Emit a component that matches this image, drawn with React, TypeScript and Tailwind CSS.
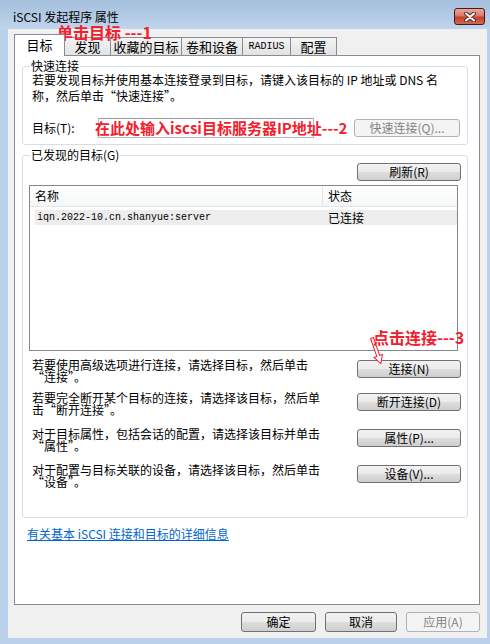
const btn =
  "flex h-[18px] items-center justify-center rounded-[3px] border border-[#707070] bg-[linear-gradient(#f2f2f2_0%,#ebebeb_50%,#dddddd_51%,#cfcfcf_100%)] text-[12px] leading-none whitespace-nowrap";
const btnOff =
  "flex h-[18px] items-center justify-center rounded-[3px] border border-[#adb2b5] bg-[#f4f4f4] text-[12px] leading-none text-[#838383] whitespace-nowrap";
const mono = "font-['Liberation_Mono',monospace] text-[10px]";

const tabs = [
  { label: "发现", w: "w-[46px]" },
  { label: "收藏的目标", w: "w-[71px]" },
  { label: "卷和设备", w: "w-[61px]" },
  { label: "RADIUS", w: "w-[48px]" },
  { label: "配置", w: "w-[46px]" },
];

const actions = [
  { lines: ["若要使用高级选项进行连接，请选择目标，然后单击", "“连接”。"], btn: "连接(N)", mt: "mt-[8px]" },
  { lines: ["若要完全断开某个目标的连接，请选择该目标，然后单", "击“断开连接”。"], btn: "断开连接(D)", mt: "mt-[9px]" },
  { lines: ["对于目标属性，包括会话的配置，请选择该目标并单击", "“属性”。"], btn: "属性(P)...", mt: "mt-[12px]" },
  { lines: ["对于配置与目标关联的设备，请选择该目标，然后单击", "“设备”。"], btn: "设备(V)...", mt: "mt-[12px]" },
];

function CloseX() {
  return (
    <svg width="14" height="10" viewBox="0 0 14 10">
      <path d="M3 1.5 L11 8.5 M11 1.5 L3 8.5" stroke="#5a2a2a" strokeWidth="4" strokeLinecap="round" />
      <path d="M3 1.5 L11 8.5 M11 1.5 L3 8.5" stroke="#ffffff" strokeWidth="2" strokeLinecap="round" />
    </svg>
  );
}

export default function App() {
  return (
    <div
      lang="zh-CN"
      className="relative flex h-[644px] w-[490px] flex-col overflow-hidden bg-[#b9d1ea] font-['Noto_Sans_CJK_SC','Noto_Sans',sans-serif] text-[12px] text-black"
    >
      {/* Title bar */}
      <div className="flex h-[29px] items-center bg-[linear-gradient(#a4bfdc,#bfd5ec)] pl-[13px] pr-[5px] pt-[4px]">
        <span className="leading-none">iSCSI 发起程序 属性</span>
        <button className="ml-auto flex h-[17px] w-[31px] items-center justify-center rounded-[3px] border border-[#4a1818] bg-[linear-gradient(#e9a89b_0%,#d9786a_45%,#c4412f_55%,#cf6a50_100%)]">
          <CloseX />
        </button>
      </div>

      {/* Client */}
      <div className="mb-[6px] ml-[8px] mr-[3px] flex flex-1 flex-col bg-[#f0f0f0] pl-[6px] pr-[7px] pt-[5px]">
        {/* Tabs */}
        <div className="flex h-[21px] items-end">
          <div className="relative z-10 -mb-px flex h-[22px] w-[51px] items-center justify-center border border-b-0 border-[#898c95] bg-white pb-[2px] text-[13px]">
            目标
          </div>
          {tabs.map((t) => (
            <div
              key={t.label}
              className={`flex h-[18px] ${t.w} items-center justify-center border border-b-0 border-l-0 border-[#898c95] bg-[linear-gradient(#f4f4f4,#e2e2e2)] text-[13px] first:border-l`}
            >
              {t.label === "RADIUS" ? <span className={mono}>{t.label}</span> : t.label}
            </div>
          ))}
        </div>

        {/* Panel */}
        <div className="flex h-[550px] flex-col border border-[#898c95] bg-white">
          {/* Quick connect */}
          <fieldset className="ml-[7px] mr-[11px] mt-[4px] rounded-[3px] border border-[#d5dfe5] pb-[6px] pl-[9px] pr-[7px]">
            <legend className="ml-[-2px] px-[1px] text-[12px] leading-[12px]">快速连接</legend>
            <p className="whitespace-nowrap leading-[16px]">
              若要发现目标并使用基本连接登录到目标，请键入该目标的 IP 地址或 DNS 名
              <br />
              称，然后单击“快速连接”。
            </p>
            <div className="mt-[14px] flex h-[20px] items-center">
              <span className="w-[66px] leading-none">目标(T):</span>
              <div className="h-[20px] w-[216px] border border-[#b5b8bf] border-t-[#9a9da5] bg-white" />
              <div className={`${btnOff} ml-auto w-[106px]`}>快速连接(Q)...</div>
            </div>
          </fieldset>

          {/* Discovered targets */}
          <fieldset className="ml-[7px] mr-[11px] mt-[4px] flex h-[369px] flex-col rounded-[3px] border border-[#d5dfe5] px-[6px]">
            <legend className="ml-[1px] px-[1px] text-[12px] leading-[12px]">已发现的目标(G)</legend>
            <div className={`${btn} ml-auto mt-[2px] w-[104px]`}>刷新(R)</div>
            <div className="mt-[4px] h-[166px] w-[429px] border border-[#828790] bg-white">
              <div className="flex h-[21px] border-b border-[#e5e5e5] bg-[linear-gradient(#ffffff,#f5f6f7)]">
                <div className="flex w-[293px] items-center border-r border-[#e5e5e5] pl-[5px]">名称</div>
                <div className="flex items-center pl-[5px]">状态</div>
              </div>
              <div className="ml-[5px] mt-[3px] flex h-[15px] items-center bg-[#ededed]">
                <span className={`w-[288px] pl-[2px] leading-none ${mono}`}>iqn.2022-10.cn.shanyue:server</span>
                <span className="pl-[5px] leading-none">已连接</span>
              </div>
            </div>

            {actions.map((a) => (
              <div key={a.btn} className={`${a.mt} flex items-start pl-[3px]`}>
                <p className="whitespace-nowrap leading-[12px]">
                  {a.lines[0]}
                  <br />
                  {a.lines[1]}
                </p>
                <div className={`${btn} ml-auto mt-[1px] w-[104px]`}>{a.btn}</div>
              </div>
            ))}
          </fieldset>

          <a className="ml-[12px] mt-[10px] w-fit leading-[12px] text-[#0066cc] underline">
            有关基本 iSCSI 连接和目标的详细信息
          </a>
        </div>

        {/* Bottom buttons */}
        <div className="mt-[7px] flex justify-end gap-[9px]">
          <div className={`${btn} h-[20px] w-[75px]`}>确定</div>
          <div className={`${btn} h-[20px] w-[72px]`}>取消</div>
          <div className={`${btnOff} h-[20px] w-[74px]`}>应用(A)</div>
        </div>
      </div>

      {/* Annotations */}
      <svg className="pointer-events-none absolute inset-0" width="490" height="644">
        <polygon
          points="0,-1.5 11,-1.5 11,-4 17,0 11,4 11,1.5 0,1.5"
          transform="translate(59 37) rotate(144.5)"
          fill="white"
          stroke="#f2202c"
          strokeWidth="1"
        />
        <polygon
          points="0,-1.5 19,-1.5 19,-4.5 27,0 19,4.5 19,1.5 0,1.5"
          transform="translate(372 338) rotate(70.9)"
          fill="white"
          stroke="#f2202c"
          strokeWidth="1"
        />
      </svg>
      <span className="absolute left-[57px] top-[24px] text-[16px] font-bold leading-[16px] text-[#f2202c]">
        单击目标 ---1
      </span>
      <span className="absolute left-[95px] top-[120px] text-[15px] font-bold leading-[16px] text-[#f2202c]">
        在此处输入iscsi目标服务器IP地址---2
      </span>
      <span className="absolute left-[373px] top-[329px] text-[16px] font-bold leading-[16px] text-[#f2202c]">
        点击连接---3
      </span>
    </div>
  );
}
